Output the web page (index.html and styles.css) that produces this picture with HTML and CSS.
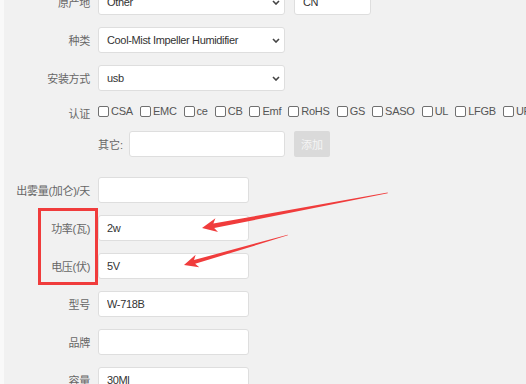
FILE: index.html
```html
<!DOCTYPE html>
<html>
  <head>
    <meta charset="utf-8">
    <meta name="viewport" content="width=device-width, initial-scale=1">
    <title>产品属性</title>
    <link rel="stylesheet" href="styles.css">
  </head>

  <body class="page">
    <form class="form">
      <div class="row">
        <label class="row__label">原产地</label>
        <div class="row__controls">
          <div class="select">
            <span>Other</span>
            <svg class="select__arrow" width="8" height="5" viewBox="0 0 8 5"><polyline points="1,1 4,4 7,1"/></svg>
          </div>
          <input class="input input--short" type="text" value="CN">
        </div>
      </div>

      <div class="row">
        <label class="row__label">种类</label>
        <div class="row__controls">
          <div class="select">
            <span>Cool-Mist Impeller Humidifier</span>
            <svg class="select__arrow" width="8" height="5" viewBox="0 0 8 5"><polyline points="1,1 4,4 7,1"/></svg>
          </div>
        </div>
      </div>

      <div class="row">
        <label class="row__label">安装方式</label>
        <div class="row__controls">
          <div class="select">
            <span>usb</span>
            <svg class="select__arrow" width="8" height="5" viewBox="0 0 8 5"><polyline points="1,1 4,4 7,1"/></svg>
          </div>
        </div>
      </div>

      <div class="row row--checks">
        <label class="row__label row__label--low">认证</label>
        <div class="checks">
          <label class="check"><input class="check__box" type="checkbox">CSA</label>
          <label class="check"><input class="check__box" type="checkbox">EMC</label>
          <label class="check"><input class="check__box" type="checkbox">ce</label>
          <label class="check"><input class="check__box" type="checkbox">CB</label>
          <label class="check"><input class="check__box" type="checkbox">Emf</label>
          <label class="check"><input class="check__box" type="checkbox">RoHS</label>
          <label class="check"><input class="check__box" type="checkbox">GS</label>
          <label class="check"><input class="check__box" type="checkbox">SASO</label>
          <label class="check"><input class="check__box" type="checkbox">UL</label>
          <label class="check"><input class="check__box" type="checkbox">LFGB</label>
          <label class="check"><input class="check__box" type="checkbox">UP</label>
        </div>
      </div>

      <div class="row row--other">
        <span></span>
        <div class="row__controls">
          <label class="other__label">其它:</label>
          <input class="input input--other" type="text">
          <button type="button" class="button" disabled>添加</button>
        </div>
      </div>

      <div class="row">
        <label class="row__label">出雾量(加仑)/天</label>
        <input class="input" type="text">
      </div>

      <div class="row">
        <label class="row__label">功率(瓦)</label>
        <input class="input" type="text" value="2w">
      </div>

      <div class="row">
        <label class="row__label">电压(伏)</label>
        <input class="input" type="text" value="5V">
      </div>

      <div class="row row--loose">
        <label class="row__label">型号</label>
        <input class="input" type="text" value="W-718B">
      </div>

      <div class="row">
        <label class="row__label">品牌</label>
        <input class="input" type="text">
      </div>

      <div class="row">
        <label class="row__label">容量</label>
        <input class="input" type="text" value="30Ml">
      </div>
    </form>

    <!-- annotation marks drawn over the form -->
    <svg class="marks" width="526" height="384" viewBox="0 0 526 384">
      <rect class="marks__box" x="39.5" y="209.5" width="57" height="74"/>
      <polygon class="marks__arrow" transform="translate(202 228) rotate(-10.7)"
        points="0,0 15,-7 12,-2.3 189,-0.3 189,0.3 12,2.3 15,7"/>
      <polygon class="marks__arrow" transform="translate(184 265) rotate(-16.1)"
        points="0,0 14,-6.5 11,-2 108,-0.3 108,0.3 11,2 14,6.5"/>
    </svg>
  </body>
</html>
```

FILE: styles.css
```css
:root {
  --bg: #f1f1f1;
  --edge: #f9f9f9;
  --line: #dedede;
  --label: #666666;
  --text: #333333;
  --mark: #f03c3c;
}

body {
  margin: 0;
  font-family: 'Liberation Sans', 'Noto Sans CJK SC', sans-serif;
  font-size: 11px;
}

.page {
  position: relative;
  height: 384px;
  overflow: hidden;
  background-color: var(--bg);
  border-left: 4px solid var(--edge);
}

.form {
  margin: -11px 0 0;
}

.row {
  display: grid;
  grid-template-columns: 86px auto;
  column-gap: 8px;
  align-items: center;
  justify-content: start;
  height: 26px;
  margin-bottom: 12px;
}

.row--checks {
  height: 16px;
  align-items: start;
}

.row--other {
  margin-bottom: 20px;
}

.row--loose {
  margin-top: 1px;
}

.row__label {
  text-align: right;
  color: var(--label);
  white-space: nowrap;
  letter-spacing: -0.3px;
}

.row__label--low {
  line-height: 16px;
  padding-top: 3px;
}

.row__controls {
  display: flex;
  align-items: center;
  gap: 9px;
}

.select,
.input {
  box-sizing: border-box;
  height: 26px;
  background: #ffffff;
  border: 1px solid var(--line);
  border-radius: 3px;
  color: var(--text);
  font: inherit;
  letter-spacing: -0.35px;
}

.select {
  display: flex;
  align-items: center;
  justify-content: space-between;
  width: 187px;
  padding: 0 4px 0 8px;
}

.select__arrow {
  fill: none;
  stroke: #444444;
  stroke-width: 1.6;
}

.input {
  width: 151px;
  padding: 0 8px;
  outline: none;
}

.input--short {
  width: 77px;
}

.input--other {
  width: 156px;
}

.other__label {
  margin-right: -3px;
  color: var(--label);
}

.button {
  width: 36px;
  height: 26px;
  padding: 0;
  border: 0;
  border-radius: 2px;
  background: #dadada;
  color: #f5f5f5;
  font: inherit;
}

.checks {
  display: flex;
  align-items: center;
  gap: 7px;
  height: 16px;
  white-space: nowrap;
  color: #555555;
  letter-spacing: -0.25px;
}

.check {
  display: flex;
  align-items: center;
}

.check__box {
  appearance: none;
  box-sizing: border-box;
  width: 11px;
  height: 11px;
  margin: 0 2px 0 0;
  border: 1px solid #707070;
  border-radius: 2px;
  background: #ffffff;
}

.marks {
  position: absolute;
  top: 0;
  left: -4px;
  pointer-events: none;
}

.marks__box {
  fill: none;
  stroke: var(--mark);
  stroke-width: 3;
}

.marks__arrow {
  fill: var(--mark);
}
```
